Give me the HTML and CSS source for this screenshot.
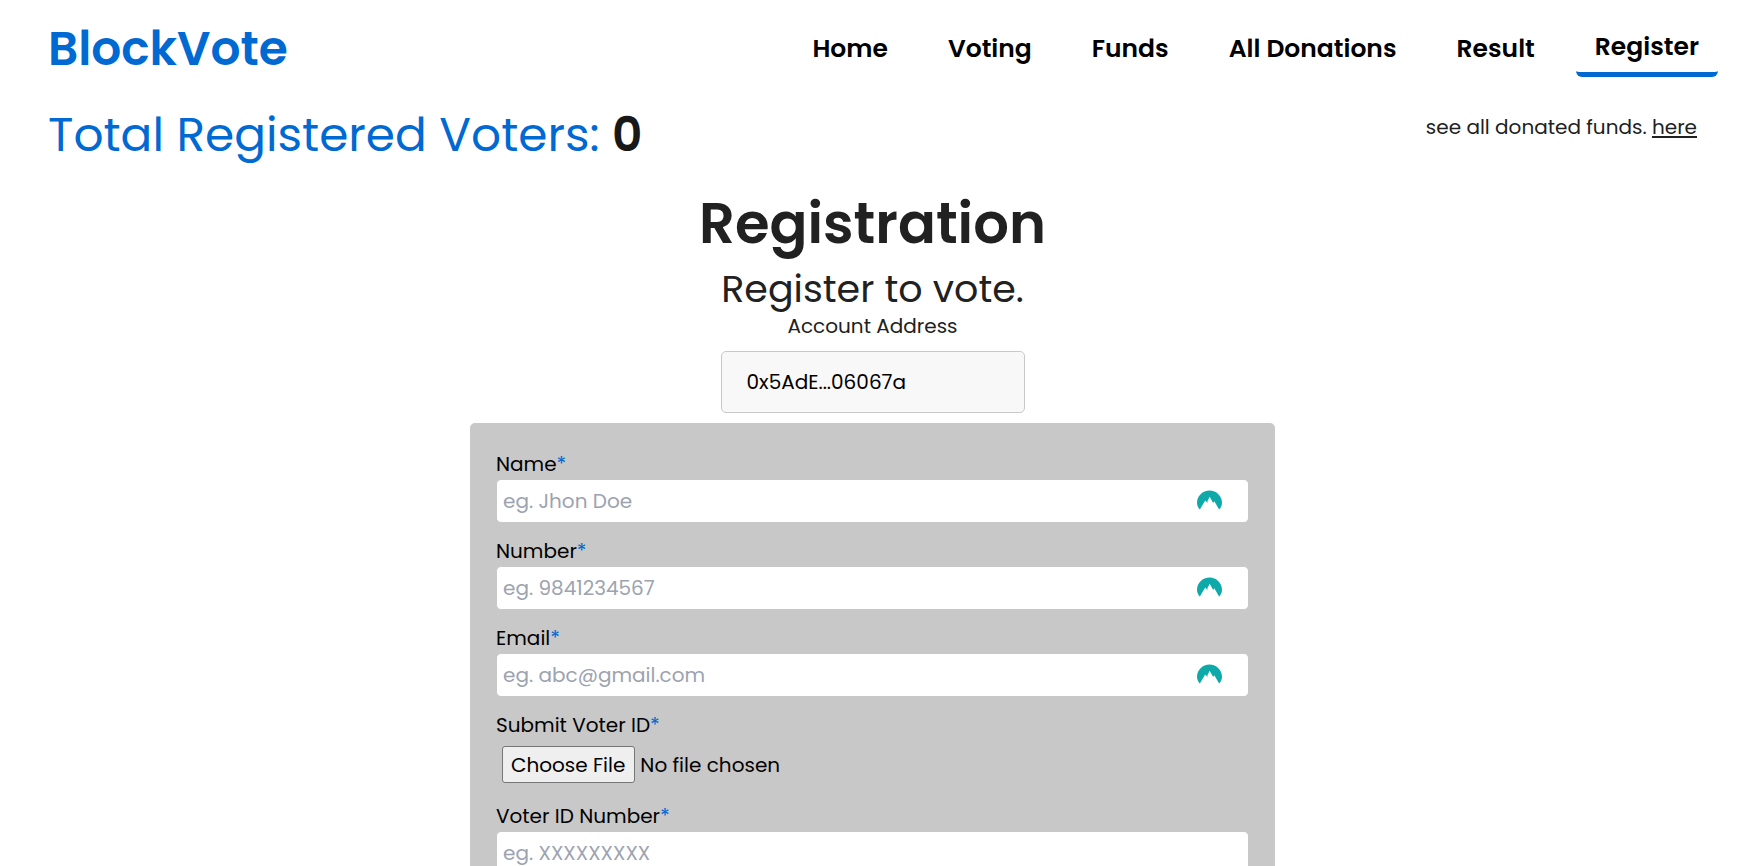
FILE: index.html
```html
<!DOCTYPE html>
<html lang="en">
<head>
<meta charset="utf-8">
<meta name="viewport" content="width=device-width, initial-scale=1">
<title>BlockVote - Register</title>
<link rel="stylesheet" href="styles.css">
</head>
<body>
<svg class="sprite" aria-hidden="true">
  <symbol id="peak" viewBox="0 0 26 20">
    <path fill="#0eaaa9" d="M3 20C1.200 18 0 15.600 0 12.800 0 5.800 5.800 0 13 0s13 5.800 13 12.800c0 2.800-1.200 5.200-3 7.200L18 11.200l-1.200 2L13.200 6.500l-2.500 5 .4 2L8.500 10.500z"/>
  </symbol>
</svg>
<div class="page">
  <header class="header">
    <a class="brand" href="#">BlockVote</a>
    <nav class="nav">
      <a class="nav-link" href="#">Home</a>
      <a class="nav-link" href="#">Voting</a>
      <a class="nav-link" href="#">Funds</a>
      <a class="nav-link" href="#">All Donations</a>
      <a class="nav-link" href="#">Result</a>
      <a class="nav-link active" href="#" aria-current="page">Register</a>
    </nav>
  </header>
  <section class="summary">
    <p class="total">Total Registered Voters: <strong class="count">0</strong></p>
    <p class="funds">see all donated funds. <a class="funds-link" href="#">here</a></p>
  </section>
  <main class="main">
    <h1 class="title">Registration</h1>
    <p class="subtitle">Register to vote.</p>
    <label class="account-label" for="account">Account Address</label>
    <input class="account" id="account" type="text" value="0x5AdE...06067a" readonly>
    <form class="form">
      <div class="field">
        <label class="label" for="name">Name<span class="star">*</span></label>
        <div class="control">
          <input class="input" id="name" type="text" placeholder="eg. Jhon Doe">
          <svg class="peak"><use href="#peak"/></svg>
        </div>
      </div>
      <div class="field">
        <label class="label" for="number">Number<span class="star">*</span></label>
        <div class="control">
          <input class="input" id="number" type="text" placeholder="eg. 9841234567">
          <svg class="peak"><use href="#peak"/></svg>
        </div>
      </div>
      <div class="field">
        <label class="label" for="email">Email<span class="star">*</span></label>
        <div class="control">
          <input class="input" id="email" type="email" placeholder="eg. abc@gmail.com">
          <svg class="peak"><use href="#peak"/></svg>
        </div>
      </div>
      <div class="field">
        <label class="label" for="voter-file">Submit Voter ID<span class="star">*</span></label>
        <input class="file" id="voter-file" type="file">
      </div>
      <div class="field">
        <label class="label" for="voter-id">Voter ID Number<span class="star">*</span></label>
        <input class="input" id="voter-id" type="text" placeholder="eg. XXXXXXXXX">
      </div>
    </form>
  </main>
</div>
</body>
</html>
```
FILE: styles.css
```css
* { box-sizing: border-box; }

body {
  margin: 0;
  height: 100vh;
  overflow: hidden;
  background: #fff;
  color: #212121;
  font-family: Poppins, Inter, sans-serif;
  font-size: 20px;
  line-height: 30px;
}

p, h1 { margin: 0; }
a { color: inherit; }
input { font: inherit; }

.sprite { position: absolute; width: 0; height: 0; }

.page { padding-right: 17px; }

.header {
  display: flex;
  justify-content: space-between;
  align-items: center;
  height: 98px;
  padding: 0 27px 0 48px;
}

.brand {
  color: #0069d2;
  font-size: 47px;
  font-weight: 600;
  line-height: 72px;
  text-decoration: none;
}

.nav { display: flex; align-items: center; gap: 22px; }

.nav-link {
  padding: 6px 19px;
  color: #000;
  font-size: 25px;
  font-weight: 600;
  line-height: 38px;
  text-decoration: none;
}

.active {
  border-bottom: 5px solid #0069d2;
  border-radius: 6px;
}

.summary {
  display: flex;
  justify-content: space-between;
  align-items: flex-start;
  padding: 0 48px;
}

.total { color: #0069d2; font-size: 47px; line-height: 74px; }
.count { color: #181818; font-weight: 600; }
.funds { padding-top: 14px; }
.funds-link { text-underline-offset: 2px; }

.main {
  display: flex;
  flex-direction: column;
  align-items: center;
  padding-top: 12px;
}

.title { font-size: 56px; font-weight: 600; line-height: 80px; }
.subtitle { font-size: 38px; line-height: 50px; }
.account-label { line-height: 24px; }

.account {
  width: 304px;
  height: 62px;
  margin: 13px 0 10px;
  padding: 0 25px;
  border: 1px solid #c8c8c8;
  border-radius: 5px;
  background: #f8f8f8;
  color: #000;
}

.form {
  display: flex;
  flex-direction: column;
  gap: 13px;
  width: 805px;
  max-width: 100%;
  padding: 26px;
  border-radius: 5px;
  background: #c8c8c8;
  color: #000;
}

.field { display: flex; flex-direction: column; }
.star { color: #0069d2; }
.control { position: relative; display: flex; }

.input {
  width: 100%;
  height: 44px;
  padding: 0 6px;
  border: 1px solid #c8c8c8;
  border-radius: 5px;
  background: #fff;
  color: #000;
}

.input::placeholder { color: #9ca3af; opacity: 1; }

.peak {
  position: absolute;
  top: 11px;
  right: 27px;
  width: 25px;
  height: 20px;
}

.file { height: 48px; padding: 6px; }

.file::file-selector-button {
  height: 37px;
  margin-right: 5px;
  padding: 0 9px 0 8px;
  border: 1px solid #767676;
  border-radius: 3px;
  background: #efefef;
  color: #000;
  font: inherit;
}
```
